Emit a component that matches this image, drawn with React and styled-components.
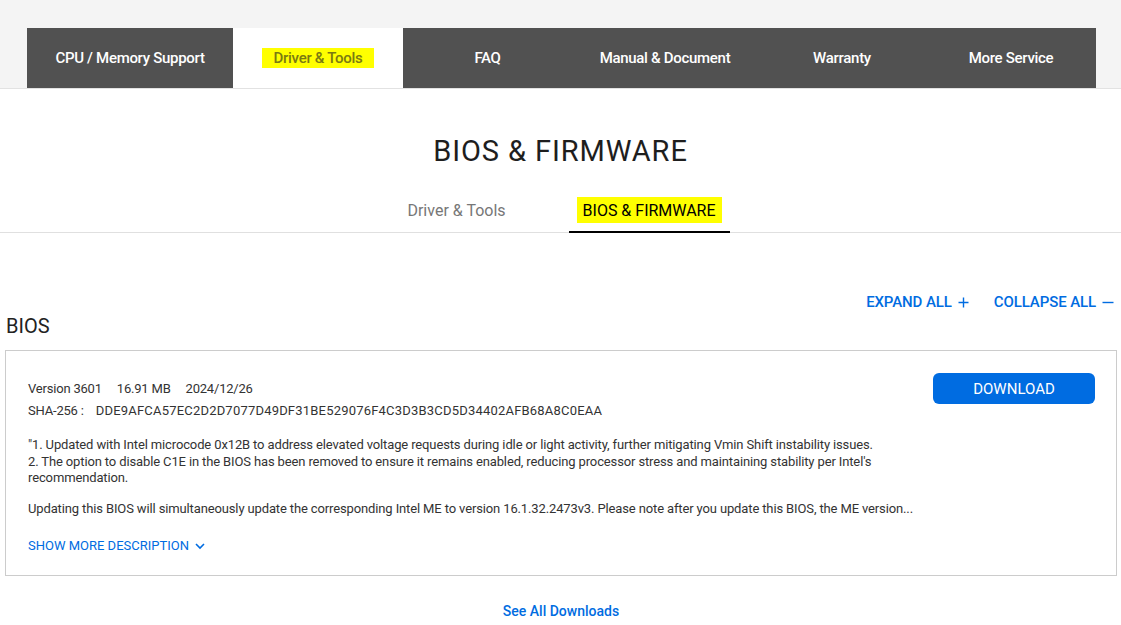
import React from "react";
import styled, { createGlobalStyle } from "styled-components";

const Global = createGlobalStyle`
  html, body { margin: 0; padding: 0; background: #fff; }
  body { font-family: Roboto, "Noto Sans", sans-serif; color: #222; }
  * { box-sizing: border-box; }
`;

const BLUE = "#006ce1";

const TopBand = styled.div`
  background: #f4f4f4;
  padding: 28px 0 0 27px;
  border-bottom: 1px solid #e2e2e2;
`;

const Nav = styled.nav`
  display: flex;
  width: 1069px;
  height: 60px;
  background: #515151;
`;

const NavTab = styled.div`
  width: ${(p) => p.$w}px;
  display: flex;
  align-items: center;
  justify-content: center;
  background: ${(p) => (p.$active ? "#fff" : "transparent")};
  color: ${(p) => (p.$active ? "#7a7a12" : "#fff")};
  font-size: 15px;
  font-weight: 500;
  letter-spacing: -0.3px;
`;

const Mark = styled.span`
  background: #ffff00;
  padding: ${(p) => p.$pad || "1px 12px"};
`;

const Title = styled.h1`
  margin: 44px 0 0;
  text-align: center;
  font-size: 29px;
  font-weight: 400;
  line-height: 36px;
  color: #1e1e1e;
  letter-spacing: 0.9px;
`;

const SubTabs = styled.div`
  display: flex;
  justify-content: center;
  gap: 55px;
  margin-top: 26px;
  border-bottom: 1px solid #e0e0e0;
  padding-left: 8px;
`;

const SubTab = styled.div`
  padding: 6px 8px 10px;
  font-size: 16px;
  line-height: 20px;
  color: ${(p) => (p.$active ? "#000" : "#777")};
  border-bottom: 2px solid ${(p) => (p.$active ? "#000" : "transparent")};
  margin-bottom: -1px;
`;

const Section = styled.section`
  padding: 0 4px 0 5px;
`;

const Controls = styled.div`
  display: flex;
  justify-content: flex-end;
  gap: 25px;
  margin-top: 60px;
  padding-right: 3px;
`;

const ControlLink = styled.a`
  color: ${BLUE};
  font-size: 15px;
  font-weight: 500;
  line-height: 18px;
  letter-spacing: -0.1px;
  cursor: pointer;
  display: flex;
  align-items: center;
  gap: 6px;
`;

const Heading = styled.h2`
  margin: 3px 0 0 1px;
  font-size: 20px;
  font-weight: 400;
  line-height: 24px;
  color: #222;
`;

const Card = styled.div`
  margin-top: 12px;
  border: 1px solid #cccccc;
  padding: 27px 21px 20px 22px;
  display: flex;
  justify-content: space-between;
`;

const Info = styled.div`
  width: 900px;
`;

const MetaRow = styled.div`
  display: flex;
  gap: 15px;
  font-size: 13px;
  line-height: 22px;
  color: #333;
  letter-spacing: -0.2px;
`;

const Hash = styled.span`
  margin-left: -3px;
  letter-spacing: 0.2px;
`;

const Desc = styled.div`
  margin-top: 15px;
  font-size: 13px;
  line-height: 16.5px;
  letter-spacing: -0.13px;
  color: #333;
  p { margin: 0 0 14px; }
  p:last-child { margin-bottom: 0; }
`;

const ShowMore = styled.a`
  display: flex;
  align-items: center;
  gap: 6px;
  margin-top: 20px;
  color: ${BLUE};
  font-size: 13px;
  line-height: 18px;
`;

const DownloadBtn = styled.button`
  align-self: flex-start;
  margin-top: -5px;
  width: 162px;
  height: 31px;
  border: none;
  border-radius: 6px;
  background: ${BLUE};
  color: #fff;
  font-family: inherit;
  font-size: 15px;
  font-weight: 400;
`;

const Footer = styled.div`
  text-align: center;
  margin-top: 25px;
`;

const FooterLink = styled.a`
  color: ${BLUE};
  font-size: 14px;
  font-weight: 500;
  line-height: 18px;
`;

const tabs = [
  { t: "CPU / Memory Support", w: 206 },
  { t: "Driver & Tools", w: 170, active: true },
  { t: "FAQ", w: 169 },
  { t: "Manual & Document", w: 186 },
  { t: "Warranty", w: 168 },
  { t: "More Service", w: 170 },
];

const Plus = () => (
  <svg width="11" height="11" viewBox="0 0 11 11">
    <path d="M5.5 0.5v10M0.5 5.5h10" stroke={BLUE} strokeWidth="1.4" />
  </svg>
);
const Minus = () => (
  <svg width="12" height="11" viewBox="0 0 12 11">
    <path d="M0.5 5.5h11" stroke={BLUE} strokeWidth="1.4" />
  </svg>
);
const Chevron = () => (
  <svg width="10" height="7" viewBox="0 0 10 7">
    <path d="M1 1l4 4 4-4" fill="none" stroke={BLUE} strokeWidth="1.6" />
  </svg>
);

export default function App() {
  return (
    <>
      <Global />
      <TopBand>
        <Nav>
          {tabs.map((x) => (
            <NavTab key={x.t} $w={x.w} $active={x.active}>
              {x.active ? <Mark>{x.t}</Mark> : x.t}
            </NavTab>
          ))}
        </Nav>
      </TopBand>
      <Title>BIOS &amp; FIRMWARE</Title>
      <SubTabs>
        <SubTab>Driver &amp; Tools</SubTab>
        <SubTab $active>
          <Mark $pad="4px 6px 3px">BIOS &amp; FIRMWARE</Mark>
        </SubTab>
      </SubTabs>
      <Section>
        <Controls>
          <ControlLink>
            EXPAND ALL <Plus />
          </ControlLink>
          <ControlLink>
            COLLAPSE ALL <Minus />
          </ControlLink>
        </Controls>
        <Heading>BIOS</Heading>
        <Card>
          <Info>
            <MetaRow>
              <span>Version 3601</span>
              <span>16.91 MB</span>
              <span>2024/12/26</span>
            </MetaRow>
            <MetaRow>
              <span>SHA-256 :</span>
              <Hash>DDE9AFCA57EC2D2D7077D49DF31BE529076F4C3D3B3CD5D34402AFB68A8C0EAA</Hash>
            </MetaRow>
            <Desc>
              <p>
                "1. Updated with Intel microcode 0x12B to address elevated voltage requests during idle or light activity, further mitigating Vmin Shift instability issues.
                <br />
                2. The option to disable C1E in the BIOS has been removed to ensure it remains enabled, reducing processor stress and maintaining stability per Intel's recommendation.
              </p>
              <p>
                Updating this BIOS will simultaneously update the corresponding Intel ME to version 16.1.32.2473v3. Please note after you update this BIOS, the ME version...
              </p>
            </Desc>
            <ShowMore>
              SHOW MORE DESCRIPTION <Chevron />
            </ShowMore>
          </Info>
          <DownloadBtn>DOWNLOAD</DownloadBtn>
        </Card>
        <Footer>
          <FooterLink>See All Downloads</FooterLink>
        </Footer>
      </Section>
    </>
  );
}
